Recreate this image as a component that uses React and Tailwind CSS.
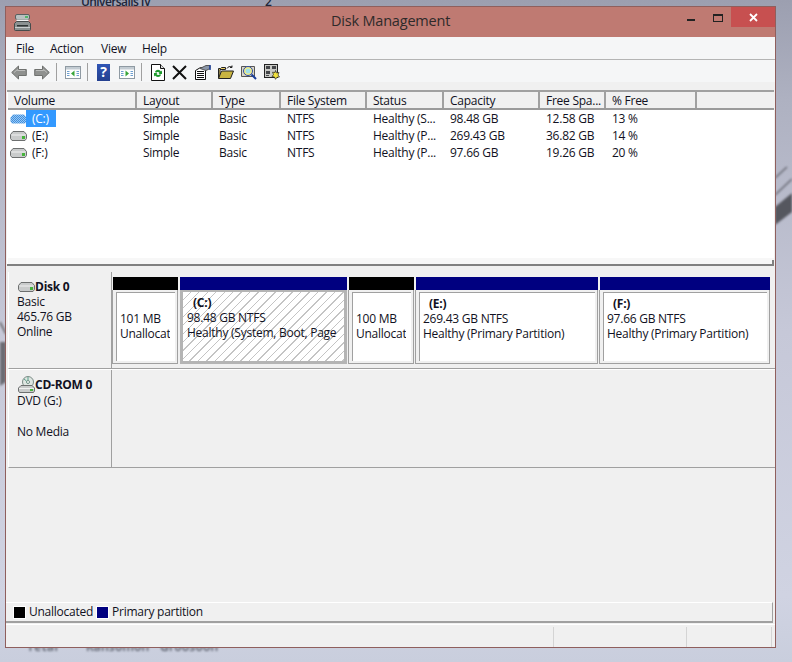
const font = { fontFamily: '"Open Sans", "Noto Sans", sans-serif' }

const columns = ["Volume", "Layout", "Type", "File System", "Status", "Capacity", "Free Spa...", "% Free", ""]
const rows = [
  { name: "(C:)", selected: true, cells: ["Simple", "Basic", "NTFS", "Healthy (S...", "98.48 GB", "12.58 GB", "13 %"] },
  { name: "(E:)", cells: ["Simple", "Basic", "NTFS", "Healthy (P...", "269.43 GB", "36.82 GB", "14 %"] },
  { name: "(F:)", cells: ["Simple", "Basic", "NTFS", "Healthy (P...", "97.66 GB", "19.26 GB", "20 %"] },
]
const gridCols = "grid grid-cols-[129px_76px_68px_86px_77px_96px_66px_91px_1fr]"

function DriveIcon({ hatched }) {
  if (hatched) {
    return (
      <svg width="17" height="10" viewBox="0 0 17 10">
        <defs>
          <pattern id="dots" width="2" height="2" patternUnits="userSpaceOnUse">
            <rect width="2" height="2" fill="#9cc8f2" />
            <rect width="1" height="1" fill="#3d8fe0" />
            <rect x="1" y="1" width="1" height="1" fill="#3d8fe0" />
          </pattern>
        </defs>
        <path d="M3 0.5h11l2.5 3v4l-1.500 2h-13l-1.500-2v-4z" fill="url(#dots)" />
      </svg>
    )
  }
  return (
    <svg width="17" height="10" viewBox="0 0 17 10">
      <path d="M3 0.500h11l2.500 3v4l-1.500 2h-13l-1.500-2v-4z" fill="#c9cbcb" stroke="#6d6f6f" />
      <path d="M1.500 4h14" stroke="#f1f1f1" />
      <rect x="12" y="5" width="3" height="3" fill="#46b33c" />
    </svg>
  )
}

function CdIcon() {
  return (
    <svg width="17" height="17" viewBox="0 0 17 17">
      <circle cx="10" cy="6" r="5.500" fill="#dfe6e2" stroke="#7b8c86" />
      <circle cx="10" cy="6" r="1.500" fill="#fff" stroke="#6d8f83" />
      <path d="M10 1v3M6 3l2.500 2" stroke="#58a08a" />
      <path d="M3 9.500h11l2.500 2.500v3l-1 1.500h-14l-1-1.500v-3z" fill="#c9cbcb" stroke="#6d6f6f" />
      <path d="M1 12.500h15" stroke="#f1f1f1" />
      <rect x="12" y="13" width="3" height="2" fill="#46b33c" />
    </svg>
  )
}

function TitleIcon() {
  return (
    <svg width="17" height="17" viewBox="0 0 17 17">
      <rect x="1.500" y="0.500" width="14" height="5" rx="1.500" fill="#b9c0c0" stroke="#59605f" />
      <rect x="11" y="2" width="3" height="2" fill="#53b56a" />
      <rect x="2.500" y="5.500" width="12" height="2" fill="#f3f5f5" />
      <path d="M0.500 9.500l2-2h12l2 2v6a1 1 0 0 1-1 1h-14a1 1 0 0 1-1-1z" fill="#8b9292" stroke="#464c4c" />
      <path d="M3 11h11v1.500H3z" fill="#2f3535" />
      <path d="M1 13.500h15" stroke="#c8cdcd" />
    </svg>
  )
}

function Arrow({ flip }) {
  return (
    <svg width="16" height="15" viewBox="0 0 16 15" className={flip ? "-scale-x-100" : ""}>
      <path d="M0.700 7.500L7.500 1v3.500h7.800v6H7.500V14z" fill="#8f918f" stroke="#6f716f" />
      <path d="M3 7.500L6.500 4.500v1h7.500" fill="none" stroke="#bdbebd" />
    </svg>
  )
}

function PaneIcon({ right }) {
  return (
    <svg width="16" height="13" viewBox="0 0 16 13">
      <rect x="0.500" y="0.500" width="15" height="12" fill="#fff" stroke="#8f9aa3" />
      <rect x="1" y="1" width="14" height="2.500" fill="#c3ccd3" />
      <path d="M2 5.500h2.500M2 7.500h2.500M2 9.500h2.500M11.500 5.500h2.500M11.500 7.500h2.500M11.500 9.500h2.500" stroke="#6d9fd0" />
      {right ? (
        <path d="M6.500 4.500l3.500 3-3.500 3z" fill="#3aa63a" />
      ) : (
        <path d="M9.500 4.500l-3.500 3 3.500 3z" fill="#3aa63a" />
      )}
    </svg>
  )
}

function HelpIcon() {
  return (
    <div className="flex h-[17px] w-[13px] items-center justify-center bg-gradient-to-b from-[#2f55b5] to-[#24408f] text-[14px] font-bold leading-none text-white">
      ?
    </div>
  )
}

function RefreshIcon() {
  return (
    <svg width="14" height="17" viewBox="0 0 14 17">
      <path d="M0.500 0.500h9l4 4v12h-13z" fill="#fff" stroke="#111" />
      <path d="M9.500 0.500v4h4" fill="#ddd" stroke="#111" />
      <path d="M4 7.500a3.500 3.500 0 0 1 6 0l1-1v3.500H7.500l1-1a2 2 0 0 0-3.500 0z" fill="#1f9a2e" />
      <path d="M10 11a3.500 3.500 0 0 1-6 0.500l-1 1V9h3.500l-1 1a2 2 0 0 0 3.500 0z" fill="#1f9a2e" />
    </svg>
  )
}

function DeleteIcon() {
  return (
    <svg width="15" height="15" viewBox="0 0 15 15">
      <path d="M1 1l13 13M14 1L1 14" stroke="#111" strokeWidth="2" />
    </svg>
  )
}

function PropsIcon() {
  return (
    <svg width="16" height="15" viewBox="0 0 16 15">
      <path d="M0.500 5.500l5-3h5v12h-10z" fill="#fff" stroke="#111" />
      <path d="M2 6.500h7M2 8.500h7M2 10.500h7M2 12.500h7" stroke="#111" />
      <path d="M5 3.500l6-3h4v3l-4 2z" fill="#8a96a8" stroke="#555" />
      <path d="M15 0v5" stroke="#1b3f9a" strokeWidth="1.500" />
    </svg>
  )
}

function FolderIcon() {
  return (
    <svg width="16" height="14" viewBox="0 0 16 14">
      <path d="M0.500 3.500h2l1-1h4v2h-5.500v8.500h-1.500z" fill="#f0d468" stroke="#222" />
      <path d="M0.500 13.500l3-7.500h12l-3 7.500z" fill="#c9b440" stroke="#222" />
      <path d="M9 3.500c1-2 3-2.500 5-1.500M14 0.500v2h-2" fill="none" stroke="#222" />
    </svg>
  )
}

function SearchIcon() {
  return (
    <svg width="16" height="16" viewBox="0 0 16 16">
      <path d="M0.500 2.500h13v10h-13z" fill="#d9d6c8" stroke="#555" />
      <circle cx="7" cy="7" r="4.500" fill="#f4ed86" stroke="#2a4aa8" />
      <circle cx="7" cy="7" r="2.500" fill="#9fe0ea" />
      <path d="M10.500 10.500l4.500 4.500" stroke="#1b3f9a" strokeWidth="2" />
    </svg>
  )
}

function SettingsIcon() {
  return (
    <svg width="16" height="16" viewBox="0 0 16 16">
      <rect x="0.500" y="0.500" width="13" height="13" fill="#c9cac6" stroke="#222" />
      <path d="M2 2h4v3H2zM8 2h4v3H8zM2 7h4v3H2z" fill="#44464a" />
      <path d="M2 11.500h3" stroke="#44464a" />
      <path d="M11.500 6.500l1 2.500 2.500-.5-1 2.500 1.500 2-2.500.3-1.500 2-1-2.300-2.500-.5 1.500-2-1-2.300 2.500.3z" fill="#f2e23c" stroke="#222" strokeWidth="0.700" />
    </svg>
  )
}

function Segment({ width, bar, hatched, label, size, status, clip }) {
  return (
    <div className="flex flex-col" style={{ width }}>
      <div className={`ml-px h-[13px] ${bar}`} />
      {hatched ? (
        <div className="ml-px h-[74px] border-[3px] border-t-[2px] border-[#b4b4b4] bg-[#d4d4d4]">
          <div className="h-full overflow-hidden whitespace-nowrap bg-[repeating-linear-gradient(135deg,#fff_0,#fff_5px,#c4c4c4_5px,#c4c4c4_6px)] pl-[4px] pt-[3px] leading-[15px]">
            <div className="pl-[6px] font-bold">{label}</div>
            <div>{size}</div>
            <div>{status}</div>
          </div>
        </div>
      ) : (
        <div className="h-[74px] border border-t-0 border-[#a0a0a0] bg-[#f0f0f0] pb-[2px] pl-[3px] pr-[2px] pt-[2px]">
          <div className="h-full overflow-hidden whitespace-nowrap border-l border-t border-[#a0a0a0] bg-white pl-[3px] pt-[3px] leading-[15px]">
            <div className="h-[15px] pl-[6px] font-bold">{label}</div>
            <div>{size}</div>
            <div className={clip ? "w-[50px] overflow-hidden" : ""}>{status}</div>
          </div>
        </div>
      )}
    </div>
  )
}

export default function App() {
  return (
    <div
      className="relative h-[662px] w-[792px] overflow-hidden bg-[linear-gradient(180deg,#9c9fb0_0,#aeb1c1_15%,#c6c8d8_50%,#d0d3e2_90%,#c9cedd_100%)] pl-[5px] pt-[6px] text-[12px] tracking-[-0.25px] text-[#111122]"
      style={font}
    >
      {/* fond d'écran */}
      <svg className="absolute left-0 top-0 blur-[1px]" width="792" height="662" viewBox="0 0 792 662">
        <path d="M775 207l17-14v19l-17 13z" fill="#55575f" />
        <path d="M775 178l12-11M775 195l17-16" stroke="#666872" strokeWidth="1.500" />
        <path d="M0 322l6 12" stroke="#555" strokeWidth="1.500" />
        <path d="M0 342h6v40l-6 4z" fill="#6b6c74" />
      </svg>
      <div className="absolute left-[81px] top-[-7px] font-semibold tracking-[-0.6px] text-[#20263a]">Universalis IV</div>
      <div className="absolute left-[265px] top-[-7px] font-semibold text-[#20263a]">2</div>
      <div className="absolute left-[27px] top-[638px] font-semibold tracking-[0.5px] text-[#555a66] blur-[1px]">Tetal</div>
      <div className="absolute left-[86px] top-[638px] font-semibold tracking-[0.2px] text-[#555a66] blur-[1px]">Ransomon</div>
      <div className="absolute left-[160px] top-[638px] font-semibold tracking-[0.2px] text-[#555a66] blur-[1px]">Groosoon</div>

      <div className="relative flex h-[642px] w-[771px] flex-col border border-[#8f5f5d] bg-[#f0f0f0]">
        {/* barre de titre */}
        <div className="relative flex h-[30px] shrink-0 items-center bg-[#bf7a72] pl-[8px]">
          <TitleIcon />
          <div className="absolute left-[325px] top-[4px] text-[14.5px] leading-[20px] tracking-[-0.2px] text-[#2e2a2a]">Disk Management</div>
          <div className="ml-auto flex h-full items-start">
            <div className="mr-[18px] mt-[12px] h-[2px] w-[8px] bg-[#222]" />
            <div className="mr-[8px] mt-[7px] h-[8px] w-[10px] border border-t-2 border-[#222]" />
            <div className="flex h-[20px] w-[44px] items-center justify-center bg-[#c75050] text-white">
              <svg width="9" height="9" viewBox="0 0 9 9">
                <path d="M1 1l7 7M8 1L1 8" stroke="#fff" strokeWidth="1.800" />
              </svg>
            </div>
          </div>
        </div>

        {/* menu */}
        <div className="flex h-[23px] shrink-0 items-center border-b border-[#b4b4b4] bg-[#f5f6f7] pl-[10px] pt-[1px]">
          <span className="w-[34px]">File</span>
          <span className="w-[51px]">Action</span>
          <span className="w-[41px]">View</span>
          <span>Help</span>
        </div>

        {/* barre d'outils */}
        <div className="flex h-[22px] shrink-0 items-center bg-[#f5f6f7] pl-[5px] pt-[2px]">
          <Arrow />
          <div className="ml-[7px]"><Arrow flip /></div>
          <div className="ml-[6px] h-[18px] w-px bg-[#a0a0a0]" />
          <div className="ml-[8px]"><PaneIcon /></div>
          <div className="ml-[6px] h-[18px] w-px bg-[#a0a0a0]" />
          <div className="ml-[9px]"><HelpIcon /></div>
          <div className="ml-[9px]"><PaneIcon right /></div>
          <div className="ml-[6px] h-[18px] w-px bg-[#a0a0a0]" />
          <div className="ml-[9px]"><RefreshIcon /></div>
          <div className="ml-[7px]"><DeleteIcon /></div>
          <div className="ml-[8px]"><PropsIcon /></div>
          <div className="ml-[7px]"><FolderIcon /></div>
          <div className="ml-[7px]"><SearchIcon /></div>
          <div className="ml-[7px]"><SettingsIcon /></div>
        </div>
        <div className="h-[8px] shrink-0 bg-[#f0f0f0]" />

        {/* liste des volumes */}
        <div className="mx-px flex h-[176px] shrink-0 flex-col border-b-2 border-t-2 border-b-[#808080] border-t-[#a0a0a0] bg-white pl-px">
          <div className={`${gridCols} h-[18px] shrink-0 border-b-2 border-[#9a9a9a] bg-[#f0f0f0]`}>
            {columns.map((c) => (
              <div key={c} className="whitespace-nowrap border-r-2 border-[#a0a0a0] pl-[6px] pt-[1px] leading-[15px] last:border-r-0">
                {c}
              </div>
            ))}
          </div>
          {rows.map((r) => (
            <div key={r.name} className={`${gridCols} h-[17px] shrink-0 items-center leading-[17px]`}>
              <div className="flex items-center pl-[2px]">
                <DriveIcon hatched={r.selected} />
                <span className={`ml-[-1px] w-[30px] pl-[6px] ${r.selected ? "bg-[#3399ff] text-white" : ""}`}>{r.name}</span>
              </div>
              {r.cells.map((c, i) => (
                <div key={i} className="whitespace-nowrap pl-[6px]">{c}</div>
              ))}
            </div>
          ))}
          <div className="mt-auto flex h-[6px] shrink-0 items-end justify-end bg-[#f7f7f7]">
            <div className="h-[4px] w-[2px] bg-[#808080]" />
          </div>
        </div>
        <div className="h-[6px] shrink-0 bg-[#f0f0f0]" />

        {/* disques */}
        <div className="ml-[2px] flex h-[97px] shrink-0 border-b border-l border-[#a0a0a0] border-l-white">
          <div className="w-[103px] shrink-0 border-r border-[#a0a0a0] pl-[8px] pt-[7px] leading-[15px]">
            <div className="flex items-center font-bold"><span className="ml-px" /><DriveIcon /><span>Disk 0</span></div>
            <div>Basic</div>
            <div>465.76 GB</div>
            <div>Online</div>
          </div>
          <div className="flex gap-[1px] pt-[5px]">
            <Segment width="66px" bar="bg-black" label="" size="101 MB" status="Unallocated" clip />
            <Segment width="168px" bar="bg-[#000080]" hatched label="(C:)" size="98.48 GB NTFS" status="Healthy (System, Boot, Page" />
            <Segment width="66px" bar="bg-black" label="" size="100 MB" status="Unallocated" clip />
            <Segment width="183px" bar="bg-[#000080]" label="(E:)" size="269.43 GB NTFS" status="Healthy (Primary Partition)" />
            <Segment width="171px" bar="bg-[#000080]" label="(F:)" size="97.66 GB NTFS" status="Healthy (Primary Partition)" />
          </div>
        </div>
        <div className="ml-[2px] flex h-[99px] shrink-0 border-b border-l border-t border-b-[#a0a0a0] border-l-white border-t-white">
          <div className="w-[103px] shrink-0 border-r border-[#a0a0a0] pl-[8px] pt-[6px] leading-[15px]">
            <div className="flex items-center font-bold"><span className="ml-px" /><CdIcon /><span>CD-ROM 0</span></div>
            <div>DVD (G:)</div>
            <div className="h-[16px]" />
            <div>No Media</div>
          </div>
        </div>
        <div className="flex-1 bg-[#f0f0f0]" />

        {/* légende */}
        <div className="mr-[2px] flex h-[21px] shrink-0 items-center border-b-2 border-r border-t border-b-[#a0a0a0] border-r-[#a0a0a0] border-t-white pl-[7px]">
          <div className="h-[13px] w-[13px] border border-white bg-black" />
          <span className="ml-[3px]">Unallocated</span>
          <div className="ml-[3px] h-[13px] w-[13px] border border-white bg-[#000080]" />
          <span className="ml-[3px]">Primary partition</span>
        </div>

        {/* barre d'état */}
        <div className="mt-[1px] flex h-[23px] shrink-0 border-t border-white pt-[2px]">
          <div className="w-[548px] border-r border-[#d4d4d4]" />
          <div className="w-[133px] border-r border-[#d4d4d4]" />
          <div className="w-[85px] border-r border-[#d4d4d4]" />
        </div>
      </div>
    </div>
  )
}
